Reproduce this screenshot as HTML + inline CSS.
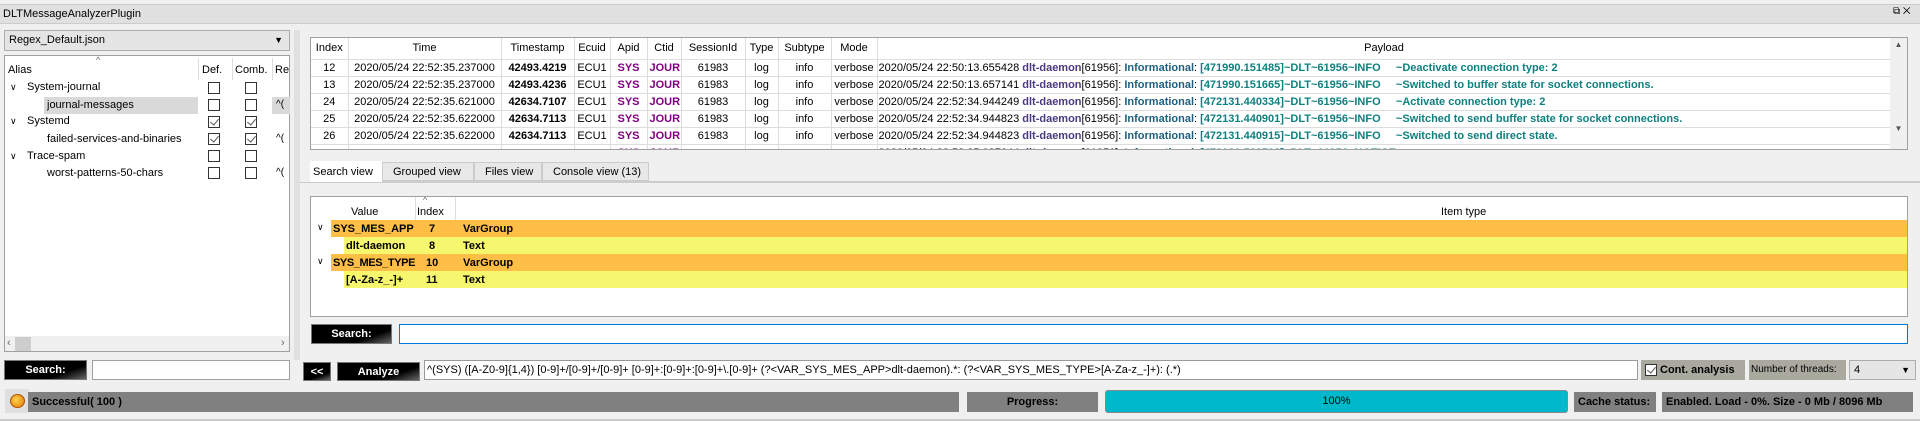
<!DOCTYPE html>
<html><head><meta charset="utf-8"><style>
*{box-sizing:border-box;margin:0;padding:0}
body{width:1920px;height:421px;background:#f0f0f0;font-family:"Liberation Sans",sans-serif;font-size:11px;color:#000;position:relative;overflow:hidden}
.a{position:absolute;white-space:nowrap}
.box{position:absolute;background:#fff;border:1px solid #a0a0a0}
.blk{position:absolute;color:#fff;font-weight:bold;text-align:center;border:1px solid #777;line-height:18px;font-size:11px;background:linear-gradient(160deg,#000 70%,#666 100%)}
table{border-collapse:collapse;font-size:11px;table-layout:fixed}
td{height:17px;padding:0 2px;border-right:1px solid #ddd;border-bottom:1px solid #ddd;white-space:nowrap;text-align:center;overflow:hidden}
.cb{position:absolute;width:12px;height:12px;border:1px solid #333;background:#fff}
.ck::after{content:"";position:absolute;left:3px;top:0px;width:4px;height:7px;border:solid #555;border-width:0 1px 1px 0;transform:rotate(40deg)}
.p{color:#800080;font-weight:bold}
.d{color:#4a3a80;font-weight:bold}.i{color:#1f5f7f;font-weight:bold}.t{color:#0f7f7f;font-weight:bold}
.gray{position:absolute;background:#808080;color:#000;font-weight:bold;line-height:20px;padding-left:4px;white-space:nowrap;overflow:hidden}
</style></head><body>
<div class="a" style="left:0;top:4px;width:1920px;height:20px;background:#e0e0e0;border-top:1px solid #ccc;border-bottom:1px solid #ccc"></div>
<div class="a" style="left:3px;top:8px">DLTMessageAnalyzerPlugin</div>
<div class="a" style="left:1893px;top:6px;font-size:10px">⧉ ✕</div>
<div class="a" style="left:4px;top:30px;width:286px;height:21px;background:#e5e5e5;border:1px solid #adadad;padding:3px 4px">Regex_Default.json<span style="position:absolute;right:6px;font-size:9px;top:4px">▼</span></div>
<div class="box" style="left:4px;top:55px;width:286px;height:297px"></div>
<div class="a" style="left:96px;top:55px;font-size:9px;color:#666">^</div>
<div class="a" style="left:8px;top:64px">Alias</div><div class="a" style="left:202px;top:64px">Def.</div><div class="a" style="left:235px;top:64px">Comb.</div><div class="a" style="left:275px;top:64px">Re</div>
<div class="a" style="left:198px;top:58px;width:1px;height:22px;background:#ddd"></div>
<div class="a" style="left:232px;top:58px;width:1px;height:22px;background:#ddd"></div>
<div class="a" style="left:272px;top:58px;width:1px;height:22px;background:#ddd"></div>
<div class="a" style="left:44px;top:97px;width:154px;height:17px;background:#d9d9d9"></div>
<div class="a" style="left:272px;top:97px;width:18px;height:17px;background:#d9d9d9"></div>
<div class="a" style="left:10px;top:82px;font-size:9px">∨</div><div class="a" style="left:27px;top:81px">System-journal</div>
<div class="a" style="left:47px;top:99px">journal-messages</div>
<div class="a" style="left:10px;top:116px;font-size:9px">∨</div><div class="a" style="left:27px;top:115px">Systemd</div>
<div class="a" style="left:47px;top:133px">failed-services-and-binaries</div>
<div class="a" style="left:10px;top:151px;font-size:9px">∨</div><div class="a" style="left:27px;top:150px">Trace-spam</div>
<div class="a" style="left:47px;top:167px">worst-patterns-50-chars</div>
<div class="a" style="left:276px;top:99px;font-size:10px">^(</div><div class="a" style="left:276px;top:133px;font-size:10px">^(</div><div class="a" style="left:276px;top:167px;font-size:10px">^(</div>
<div class="cb" style="left:208px;top:82px"></div><div class="cb" style="left:245px;top:82px"></div>
<div class="cb" style="left:208px;top:99px"></div><div class="cb" style="left:245px;top:99px"></div>
<div class="cb ck" style="left:208px;top:116px"></div><div class="cb ck" style="left:245px;top:116px"></div>
<div class="cb ck" style="left:208px;top:133px"></div><div class="cb ck" style="left:245px;top:133px"></div>
<div class="cb" style="left:208px;top:150px"></div><div class="cb" style="left:245px;top:150px"></div>
<div class="cb" style="left:208px;top:167px"></div><div class="cb" style="left:245px;top:167px"></div>
<div class="a" style="left:5px;top:336px;width:284px;height:15px;background:#f0f0f0"></div>
<div class="a" style="left:15px;top:337px;width:16px;height:14px;background:#cdcdcd"></div>
<div class="a" style="left:7px;top:337px;font-size:11px;color:#666">‹</div><div class="a" style="left:281px;top:337px;font-size:11px;color:#666">›</div>
<div class="blk" style="left:4px;top:360px;width:83px;height:20px">Search:</div>
<div class="box" style="left:92px;top:360px;width:198px;height:20px"></div>
<div class="a" style="left:294px;top:30px;width:6px;height:330px;background:#e0e0e0"></div>
<div class="box" style="left:310px;top:37px;width:1598px;height:113px;overflow:hidden">
<table style="position:absolute;left:0;top:0;width:1580px">
<colgroup><col style="width:37px"><col style="width:153px"><col style="width:73px"><col style="width:36px"><col style="width:37px"><col style="width:34px"><col style="width:64px"><col style="width:33px"><col style="width:53px"><col style="width:46px"><col></colgroup>
<tr style="height:21px"><td>Index</td><td>Time</td><td>Timestamp</td><td>Ecuid</td><td>Apid</td><td>Ctid</td><td>SessionId</td><td>Type</td><td>Subtype</td><td>Mode</td><td style="border-right:none">Payload</td></tr>
<tr><td>12</td><td>2020/05/24 22:52:35.237000</td><td><b>42493.4219</b></td><td>ECU1</td><td class="p">SYS</td><td class="p">JOUR</td><td>61983</td><td>log</td><td>info</td><td>verbose</td><td style="text-align:left;padding-left:1px">2020/05/24 22:50:13.655428 <span class="d">dlt-daemon</span>[61956]: <span class="i">Informational</span>: <span class="t">[471990.151485]~DLT~61956~INFO &nbsp;&nbsp;&nbsp;&nbsp;~Deactivate connection type: 2</span></td></tr>
<tr><td>13</td><td>2020/05/24 22:52:35.237000</td><td><b>42493.4236</b></td><td>ECU1</td><td class="p">SYS</td><td class="p">JOUR</td><td>61983</td><td>log</td><td>info</td><td>verbose</td><td style="text-align:left;padding-left:1px">2020/05/24 22:50:13.657141 <span class="d">dlt-daemon</span>[61956]: <span class="i">Informational</span>: <span class="t">[471990.151665]~DLT~61956~INFO &nbsp;&nbsp;&nbsp;&nbsp;~Switched to buffer state for socket connections.</span></td></tr>
<tr><td>24</td><td>2020/05/24 22:52:35.621000</td><td><b>42634.7107</b></td><td>ECU1</td><td class="p">SYS</td><td class="p">JOUR</td><td>61983</td><td>log</td><td>info</td><td>verbose</td><td style="text-align:left;padding-left:1px">2020/05/24 22:52:34.944249 <span class="d">dlt-daemon</span>[61956]: <span class="i">Informational</span>: <span class="t">[472131.440334]~DLT~61956~INFO &nbsp;&nbsp;&nbsp;&nbsp;~Activate connection type: 2</span></td></tr>
<tr><td>25</td><td>2020/05/24 22:52:35.622000</td><td><b>42634.7113</b></td><td>ECU1</td><td class="p">SYS</td><td class="p">JOUR</td><td>61983</td><td>log</td><td>info</td><td>verbose</td><td style="text-align:left;padding-left:1px">2020/05/24 22:52:34.944823 <span class="d">dlt-daemon</span>[61956]: <span class="i">Informational</span>: <span class="t">[472131.440901]~DLT~61956~INFO &nbsp;&nbsp;&nbsp;&nbsp;~Switched to send buffer state for socket connections.</span></td></tr>
<tr><td>26</td><td>2020/05/24 22:52:35.622000</td><td><b>42634.7113</b></td><td>ECU1</td><td class="p">SYS</td><td class="p">JOUR</td><td>61983</td><td>log</td><td>info</td><td>verbose</td><td style="text-align:left;padding-left:1px">2020/05/24 22:52:34.944823 <span class="d">dlt-daemon</span>[61956]: <span class="i">Informational</span>: <span class="t">[472131.440915]~DLT~61956~INFO &nbsp;&nbsp;&nbsp;&nbsp;~Switched to send direct state.</span></td></tr>
<tr><td></td><td></td><td></td><td></td><td class="p">SYS</td><td class="p">JOUR</td><td></td><td></td><td></td><td></td><td style="text-align:left;padding-left:1px">2020/05/24 22:52:35.037644 <span class="d">dlt-daemon</span>[61956]: <span class="i">Informational</span>: <span class="t">[472131.533708]~DLT~61956~NOTICE</span></td></tr>
</table>
<div class="a" style="right:0;top:0;width:17px;height:111px;background:#f0f0f0;font-size:8px;color:#555;text-align:center;line-height:14px">▲<br><br><br><br><br><br>▼</div>
</div>
<div class="a" style="left:310px;top:181px;width:1610px;height:1px;background:#ccc"></div>
<div class="a" style="left:310px;top:161px;width:72px;height:21px;background:#fff;padding:5px 3px">Search view</div>
<div class="a" style="left:382px;top:162px;width:92px;height:19px;background:#e8e8e8;border:1px solid #ccc;padding:3px 10px">Grouped view</div>
<div class="a" style="left:474px;top:162px;width:68px;height:19px;background:#e8e8e8;border:1px solid #ccc;padding:3px 10px">Files view</div>
<div class="a" style="left:542px;top:162px;width:107px;height:19px;background:#e8e8e8;border:1px solid #ccc;padding:3px 10px">Console view (13)</div>
<div class="a" style="left:300px;top:182px;width:1620px;height:175px;background:#f0f0f0;border-top:1px solid #ccc"></div>
<div class="box" style="left:310px;top:196px;width:1598px;height:121px;overflow:hidden">
<div class="a" style="left:40px;top:9px">Value</div>
<div class="a" style="left:112px;top:-2px;font-size:9px;color:#666">^</div>
<div class="a" style="left:106px;top:9px">Index</div>
<div class="a" style="left:1130px;top:9px">Item type</div>
<div class="a" style="left:104px;top:0;width:1px;height:23px;background:#ddd"></div>
<div class="a" style="left:144px;top:0;width:1px;height:23px;background:#ddd"></div>
<div class="a" style="left:20px;top:23px;width:1580px;height:17px;background:#ffbf47"></div>
<div class="a" style="left:33px;top:40px;width:1567px;height:17px;background:#f7f76f"></div>
<div class="a" style="left:20px;top:57px;width:1580px;height:17px;background:#ffbf47"></div>
<div class="a" style="left:33px;top:74px;width:1567px;height:17px;background:#f7f76f"></div>
<div class="a" style="left:6px;top:25px;font-size:9px">∨</div><div class="a" style="left:6px;top:59px;font-size:9px">∨</div>
<div class="a" style="left:22px;top:26px;font-weight:bold">SYS_MES_APP</div><div class="a" style="left:118px;top:26px;font-weight:bold">7</div><div class="a" style="left:152px;top:26px;font-weight:bold">VarGroup</div>
<div class="a" style="left:35px;top:43px;font-weight:bold">dlt-daemon</div><div class="a" style="left:118px;top:43px;font-weight:bold">8</div><div class="a" style="left:152px;top:43px;font-weight:bold">Text</div>
<div class="a" style="left:22px;top:60px;font-weight:bold;letter-spacing:-0.4px">SYS_MES_TYPE</div><div class="a" style="left:115px;top:60px;font-weight:bold">10</div><div class="a" style="left:152px;top:60px;font-weight:bold">VarGroup</div>
<div class="a" style="left:35px;top:77px;font-weight:bold">[A-Za-z_-]+</div><div class="a" style="left:115px;top:77px;font-weight:bold">11</div><div class="a" style="left:152px;top:77px;font-weight:bold">Text</div>
</div>
<div class="blk" style="left:311px;top:324px;width:81px;height:20px">Search:</div>
<div class="a" style="left:399px;top:324px;width:1509px;height:20px;background:#fff;border:1px solid #0078d7"></div>
<div class="blk" style="left:303px;top:362px;width:28px;height:19px">&lt;&lt;</div>
<div class="blk" style="left:337px;top:362px;width:83px;height:19px">Analyze</div>
<div class="a" style="left:424px;top:360px;width:1214px;height:20px;background:#fff;border:1px solid #999;padding:3px 2px;font-size:11px">^(SYS) ([A-Z0-9]{1,4}) [0-9]+/[0-9]+/[0-9]+ [0-9]+:[0-9]+:[0-9]+\.[0-9]+ (?&lt;VAR_SYS_MES_APP&gt;dlt-daemon).*: (?&lt;VAR_SYS_MES_TYPE&gt;[A-Za-z_-]+): (.*)</div>
<div class="a" style="left:1641px;top:360px;width:104px;height:20px;background:#a9a9a0;padding:4px 0 0 19px;font-weight:bold">Cont. analysis</div>
<div class="cb ck" style="left:1645px;top:364px"></div>
<div class="a" style="left:1749px;top:360px;width:97px;height:20px;background:#a9a9a0;padding:4px 2px;font-size:10px">Number of threads:</div>
<div class="a" style="left:1849px;top:360px;width:67px;height:20px;background:#e5e5e5;border:1px solid #adadad;padding:3px 4px">4<span style="position:absolute;right:5px;top:4px;font-size:9px">▼</span></div>
<div class="a" style="left:5px;top:389px;width:24px;height:24px;background:#e0e0e0"></div>
<div class="a" style="left:10px;top:394px;width:15px;height:14px;border-radius:50%;background:radial-gradient(circle at 40% 40%,#ffd24d,#e07800);border:1px solid #b05000"></div>
<div class="gray" style="left:28px;top:392px;width:931px;height:20px">Successful( 100 )</div>
<div class="gray" style="left:967px;top:392px;width:131px;height:20px;text-align:center;padding:0">Progress:</div>
<div class="a" style="left:1105px;top:390px;width:463px;height:23px;background:#00b8cc;border:1px solid #888;border-radius:3px;text-align:center;line-height:21px">100%</div>
<div class="gray" style="left:1574px;top:392px;width:82px;height:20px">Cache status:</div>
<div class="gray" style="left:1662px;top:392px;width:251px;height:20px">Enabled. Load - 0%. Size - 0 Mb / 8096 Mb</div>
<div class="a" style="left:0;top:419px;width:1920px;height:2px;background:#ccc"></div>
</body></html>
